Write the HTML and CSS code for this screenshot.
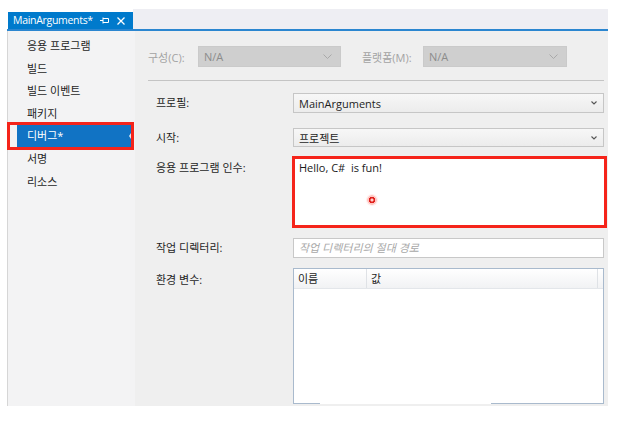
FILE: index.html
```html
<!DOCTYPE html>
<html lang="ko">
<head>
<meta charset="utf-8">
<title>MainArguments</title>
<link rel="stylesheet" href="styles.css">
</head>
<body>
<div class="window">
  <div class="tabstrip">
    <div class="tab">
      <span class="tab-title">MainArguments*</span>
      <svg class="pin" width="9" height="7" viewBox="0 0 9 7"><path d="M0 3.5H3M3 0.5V6.5M3 1.5H8.5V5.5H3" fill="none" stroke="#fff" stroke-width="1"/></svg>
      <svg class="close" width="8" height="8" viewBox="0 0 8 8"><path d="M0.5 0.5L7.5 7.5M7.5 0.5L0.5 7.5" stroke="#fff" stroke-width="1.3"/></svg>
    </div>
    <div class="tab-fill"></div>
  </div>
  <div class="tabline"></div>
  <div class="body">
    <nav class="nav">
      <div class="nav-item">응용 프로그램</div>
      <div class="nav-item">빌드</div>
      <div class="nav-item">빌드 이벤트</div>
      <div class="nav-item">패키지</div>
      <div class="nav-item selected">디버그*</div>
      <div class="nav-item">서명</div>
      <div class="nav-item">리소스</div>
      <div class="nav-highlight"></div>
    </nav>
    <main class="main">
      <div class="config-row">
        <span class="dis-label cfg-label">구성(C):</span>
        <div class="combo disabled cfg-combo"><span>N/A</span><svg width="9" height="5" viewBox="0 0 9 5"><path d="M0.5 0.5L4.5 4.5L8.5 0.5" fill="none" stroke="#a9a9a9" stroke-width="1"/></svg></div>
        <span class="dis-label plat-label">플랫폼(M):</span>
        <div class="combo disabled plat-combo"><span>N/A</span><svg width="9" height="5" viewBox="0 0 9 5"><path d="M0.5 0.5L4.5 4.5L8.5 0.5" fill="none" stroke="#a9a9a9" stroke-width="1"/></svg></div>
      </div>
      <div class="sep"></div>
      <div class="form">
        <div class="row row-profile">
          <span class="label">프로필:</span>
          <div class="combo field"><span>MainArguments</span><svg width="6" height="4" viewBox="0 0 6 4"><path d="M0.5 0.5L3 3L5.5 0.5" fill="none" stroke="#555" stroke-width="1.1"/></svg></div>
        </div>
        <div class="row row-start">
          <span class="label">시작:</span>
          <div class="combo field"><span>프로젝트</span><svg width="6" height="4" viewBox="0 0 6 4"><path d="M0.5 0.5L3 3L5.5 0.5" fill="none" stroke="#555" stroke-width="1.1"/></svg></div>
        </div>
        <div class="row row-args">
          <span class="label top">응용 프로그램 인수:</span>
          <div class="args">Hello, C#&nbsp; is fun!<span class="cursor-dot"></span></div>
        </div>
        <div class="row row-dir">
          <span class="label">작업 디렉터리:</span>
          <div class="input"><span class="placeholder">작업 디렉터리의 절대 경로</span></div>
        </div>
        <div class="row row-env">
          <span class="label top">환경 변수:</span>
          <div class="env">
            <div class="env-head">
              <span class="col-name">이름</span>
              <span class="col-value">값</span>
              <span class="col-end"></span>
            </div>
          </div>
        </div>
      </div>
    </main>
  </div>
</div>
</body>
</html>
```

FILE: styles.css
```css
* { box-sizing: border-box; }

html, body {
  margin: 0;
  padding: 0;
  background: #ffffff;
}

body {
  font-family: "Open Sans", "Noto Sans CJK KR", sans-serif;
  font-size: 11px;
  color: #1e1e1e;
}

.window {
  margin: 9px 0 0 7px;
  width: 601px;
  height: 397px;
  display: flex;
  flex-direction: column;
  overflow: hidden;
}

.tabstrip {
  height: 20px;
  display: flex;
  align-items: flex-end;
  flex: none;
}

.tab {
  margin-left: 1px;
  width: 125px;
  height: 17px;
  background: #007acc;
  color: #ffffff;
  display: flex;
  align-items: center;
  padding-left: 5px;
}

.tab-title {
  font-size: 10.5px;
  line-height: 17px;
  letter-spacing: -0.3px;
}

.pin {
  margin-left: 7px;
}

.close {
  margin-left: 8px;
}

.tab-fill {
  flex: 1;
  height: 20px;
  background: #eeeef3;
}

.tabline {
  height: 2px;
  background: #2b86d0;
  flex: none;
}

.body {
  flex: 1;
  display: flex;
  min-height: 0;
}

.nav {
  position: relative;
  width: 128px;
  flex: none;
  background: #f3f3f4;
  border-left: 1px solid #d6d6d6;
  padding-top: 4px;
}

.nav-item {
  height: 22.6px;
  line-height: 22.6px;
  padding-left: 19px;
  white-space: nowrap;
}

.nav-item.selected {
  margin-left: 9px;
  margin-right: 4px;
  padding-left: 10px;
  background: #1173c4;
  color: #ffffff;
  position: relative;
}

.nav-item.selected::after {
  content: "";
  position: absolute;
  right: 0;
  top: 8px;
  border-style: solid;
  border-width: 3.5px 2px 3.5px 0;
  border-color: transparent #dfe8f2 transparent transparent;
}

.nav-highlight {
  position: absolute;
  left: -1px;
  top: 91px;
  width: 127px;
  height: 28px;
  border: 3px solid #f5241a;
}

.main {
  flex: 1;
  background: #efefef;
  padding-top: 15px;
}

.config-row {
  display: flex;
  align-items: center;
  padding-left: 13px;
}

.dis-label {
  color: #a3a3a3;
  white-space: nowrap;
}

.cfg-label { width: 50px; }

.plat-label {
  width: 61px;
  margin-left: 21px;
}

.combo {
  display: flex;
  align-items: center;
  justify-content: space-between;
  height: 21px;
  padding: 0 8px 0 5px;
}

.combo.disabled {
  background: #cfcfcf;
  border: 1px solid #cacaca;
  color: #8c8c8c;
}

.cfg-combo { width: 143px; }
.plat-combo { width: 144px; }

.sep {
  height: 1px;
  background: #c4c4c4;
  margin: 13px 4px 0 13px;
}

.form {
  padding-left: 21px;
}

.row {
  display: grid;
  grid-template-columns: 137px 311px;
  align-items: start;
}

.label {
  line-height: 20px;
  white-space: nowrap;
}

.label.top {
  padding-top: 2px;
}

.row-profile { margin-top: 12px; }
.row-start { margin-top: 15px; }
.row-args { margin-top: 8px; }
.row-dir { margin-top: 10px; }
.row-env { margin-top: 10px; }

.combo.field {
  height: 20px;
  background: linear-gradient(#f7f7f7, #ececec);
  border: 1px solid #c6c6c6;
  padding: 0 6px 0 5px;
}

.row-start .combo.field {
  height: 19px;
}

.args {
  position: relative;
  margin-left: -1px;
  width: 315px;
  height: 72px;
  background: #ffffff;
  border: 3px solid #f5241a;
  padding: 1px 0 0 4px;
  line-height: 16px;
  color: #1a1a1a;
}

.cursor-dot {
  position: absolute;
  left: 71px;
  top: 35px;
  width: 12px;
  height: 12px;
  border-radius: 50%;
  background: radial-gradient(circle, #ffd0cc 0 1.3px, #e0201c 1.8px 3px, rgba(255, 90, 80, 0.35) 3.5px 4.5px, rgba(255, 120, 110, 0.12) 5px 6px);
}

.input {
  height: 20px;
  background: #ffffff;
  border: 1px solid #c8c8c8;
  padding-left: 5px;
  line-height: 18px;
}

.placeholder {
  color: #a8a8a8;
  font-style: italic;
}

.env {
  position: relative;
  height: 136px;
  background: #ffffff;
  border: 1px solid #a9bacd;
  border-bottom: none;
}

.env::after {
  content: "";
  position: absolute;
  left: -1px;
  right: -1px;
  bottom: 0;
  height: 1px;
  background: linear-gradient(90deg, #a9bacd 0 27px, #ffffff 27px 198px, #a9bacd 198px);
}

.env-head {
  display: flex;
  height: 20px;
  line-height: 20px;
  background: linear-gradient(#ffffff, #f1f2f4);
  border-bottom: 1px solid #e3e6ea;
}

.col-name {
  width: 73px;
  padding-left: 4px;
  border-right: 1px solid #dfe2e6;
}

.col-value {
  flex: 1;
  padding-left: 4px;
  border-right: 1px solid #dfe2e6;
}

.col-end {
  width: 5px;
}
```
